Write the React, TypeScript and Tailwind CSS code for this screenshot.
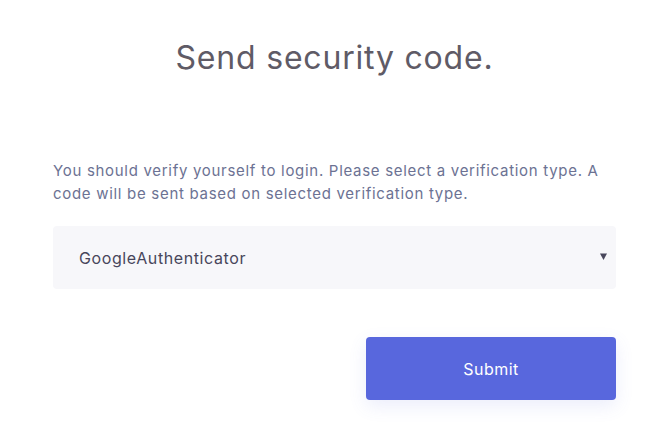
import { useState } from 'react'

export default function App() {
  const [method, setMethod] = useState('GoogleAuthenticator')

  return (
    <div
      className="min-h-[433px] w-[657px] bg-white"
      style={{ fontFamily: 'Inter, "Open Sans", sans-serif' }}
    >
      <div className="ml-[53px] w-[563px] pt-[38px]">
        <h1 className="text-center text-[32px] font-normal leading-[40px] tracking-[0.8px] text-[#5f5b66]">
          Send security code.
        </h1>

        <p className="mt-[81px] text-[15px] leading-[23px] tracking-[0.7px] text-[#6c7293]">
          You should verify yourself to login. Please select a verification type. A
          code will be sent based on selected verification type.
        </p>

        <div className="relative mt-[21px]">
          <select
            value={method}
            onChange={(e) => setMethod(e.target.value)}
            className="h-[63px] w-full appearance-none rounded-[4px] bg-[#f7f7fa] pl-[26px] pr-10 text-[16px] tracking-[0.6px] text-[#48465b] outline-none"
          >
            <option>GoogleAuthenticator</option>
            <option>Email</option>
            <option>Phone</option>
          </select>
          <svg
            className="pointer-events-none absolute right-[9px] top-[27px]"
            width="7"
            height="7"
            viewBox="0 0 7 7"
          >
            <path d="M0 0.5h7L3.5 7z" fill="#48465b" />
          </svg>
        </div>

        <div className="mt-[48px] flex justify-end">
          <button
            type="button"
            className="h-[63px] w-[250px] rounded-[4px] bg-[#5867dd] text-[16px] font-normal tracking-[0.5px] text-white shadow-[0_6px_18px_rgba(88,103,221,0.12)]"
          >
            Submit
          </button>
        </div>
      </div>
    </div>
  )
}
